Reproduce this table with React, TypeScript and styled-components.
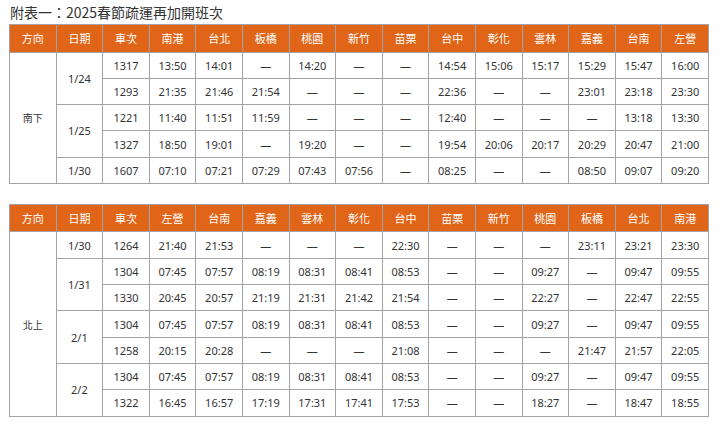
import styled, { createGlobalStyle } from "styled-components";

const GlobalStyle = createGlobalStyle`
  html, body {
    margin: 0;
    padding: 0;
    background: #ffffff;
  }
  body {
    font-family: "Noto Sans", "Noto Sans CJK TC", sans-serif;
    color: #333333;
  }
`;

const Page = styled.div`
  width: 720px;
  height: 424px;
  padding: 3px 0 0 9px;
  box-sizing: border-box;
  display: flex;
  flex-direction: column;
  gap: 20px;
`;

const Block = styled.section`
  display: flex;
  flex-direction: column;
`;

const Title = styled.h1`
  margin: 0 0 0 1px;
  height: 21px;
  font-size: 14px;
  font-weight: 400;
  line-height: 18px;
  color: #333333;
  font-family: "Noto Sans CJK TC", sans-serif;
`;

const Table = styled.table`
  width: 700px;
  table-layout: fixed;
  border-collapse: collapse;
  border: 1px solid #8f8f8f;
  font-size: 11px;
`;

const HeadRow = styled.tr`
  height: 27.5px;
`;

const Row = styled.tr`
  height: 26.3px;
`;

const HeadCell = styled.th`
  background: #e06518;
  color: #ffffff;
  font-weight: 400;
  font-family: "Noto Sans CJK TC", sans-serif;
  font-size: 11px;
  border: 1px solid #a3a3a3;
  padding: 0;
  text-align: center;
  vertical-align: middle;
`;

const Cell = styled.td<{ $dir?: boolean }>`
  border: 1px solid #a3a3a3;
  padding: 0;
  text-align: center;
  vertical-align: middle;
  color: #333333;
  font-family: ${(p) =>
    p.$dir ? `"Noto Sans CJK TC", sans-serif` : `"Noto Sans", "Noto Sans CJK TC", sans-serif`};
  font-size: ${(p) => (p.$dir ? "10px" : "11px")};
`;

interface IGroup {
  date: string;
  trains: string[][];
}

interface ISchedule {
  dir: string;
  stations: string[];
  groups: IGroup[];
}

const D = "—";

const south: ISchedule = {
  dir: "南下",
  stations: ["南港", "台北", "板橋", "桃園", "新竹", "苗栗", "台中", "彰化", "雲林", "嘉義", "台南", "左營"],
  groups: [
    {
      date: "1/24",
      trains: [
        ["1317", "13:50", "14:01", D, "14:20", D, D, "14:54", "15:06", "15:17", "15:29", "15:47", "16:00"],
        ["1293", "21:35", "21:46", "21:54", D, D, D, "22:36", D, D, "23:01", "23:18", "23:30"],
      ],
    },
    {
      date: "1/25",
      trains: [
        ["1221", "11:40", "11:51", "11:59", D, D, D, "12:40", D, D, D, "13:18", "13:30"],
        ["1327", "18:50", "19:01", D, "19:20", D, D, "19:54", "20:06", "20:17", "20:29", "20:47", "21:00"],
      ],
    },
    {
      date: "1/30",
      trains: [["1607", "07:10", "07:21", "07:29", "07:43", "07:56", D, "08:25", D, D, "08:50", "09:07", "09:20"]],
    },
  ],
};

const north: ISchedule = {
  dir: "北上",
  stations: ["左營", "台南", "嘉義", "雲林", "彰化", "台中", "苗栗", "新竹", "桃園", "板橋", "台北", "南港"],
  groups: [
    {
      date: "1/30",
      trains: [["1264", "21:40", "21:53", D, D, D, "22:30", D, D, D, "23:11", "23:21", "23:30"]],
    },
    {
      date: "1/31",
      trains: [
        ["1304", "07:45", "07:57", "08:19", "08:31", "08:41", "08:53", D, D, "09:27", D, "09:47", "09:55"],
        ["1330", "20:45", "20:57", "21:19", "21:31", "21:42", "21:54", D, D, "22:27", D, "22:47", "22:55"],
      ],
    },
    {
      date: "2/1",
      trains: [
        ["1304", "07:45", "07:57", "08:19", "08:31", "08:41", "08:53", D, D, "09:27", D, "09:47", "09:55"],
        ["1258", "20:15", "20:28", D, D, D, "21:08", D, D, D, "21:47", "21:57", "22:05"],
      ],
    },
    {
      date: "2/2",
      trains: [
        ["1304", "07:45", "07:57", "08:19", "08:31", "08:41", "08:53", D, D, "09:27", D, "09:47", "09:55"],
        ["1322", "16:45", "16:57", "17:19", "17:31", "17:41", "17:53", D, D, "18:27", D, "18:47", "18:55"],
      ],
    },
  ],
};

function ScheduleTable({ data }: { data: ISchedule }) {
  const total = data.groups.reduce((n, g) => n + g.trains.length, 0);
  return (
    <Table>
      <thead>
        <HeadRow>
          <HeadCell>方向</HeadCell>
          <HeadCell>日期</HeadCell>
          <HeadCell>車次</HeadCell>
          {data.stations.map((s) => (
            <HeadCell key={s}>{s}</HeadCell>
          ))}
        </HeadRow>
      </thead>
      <tbody>
        {data.groups.map((g, gi) =>
          g.trains.map((t, ti) => (
            <Row key={`${gi}-${ti}`}>
              {gi === 0 && ti === 0 && (
                <Cell $dir rowSpan={total}>
                  {data.dir}
                </Cell>
              )}
              {ti === 0 && <Cell rowSpan={g.trains.length}>{g.date}</Cell>}
              {t.map((v, i) => (
                <Cell key={i}>{v}</Cell>
              ))}
            </Row>
          ))
        )}
      </tbody>
    </Table>
  );
}

export default function App() {
  return (
    <>
      <GlobalStyle />
      <Page>
        <Block>
          <Title>附表一：2025春節疏運再加開班次</Title>
          <ScheduleTable data={south} />
        </Block>
        <ScheduleTable data={north} />
      </Page>
    </>
  );
}
